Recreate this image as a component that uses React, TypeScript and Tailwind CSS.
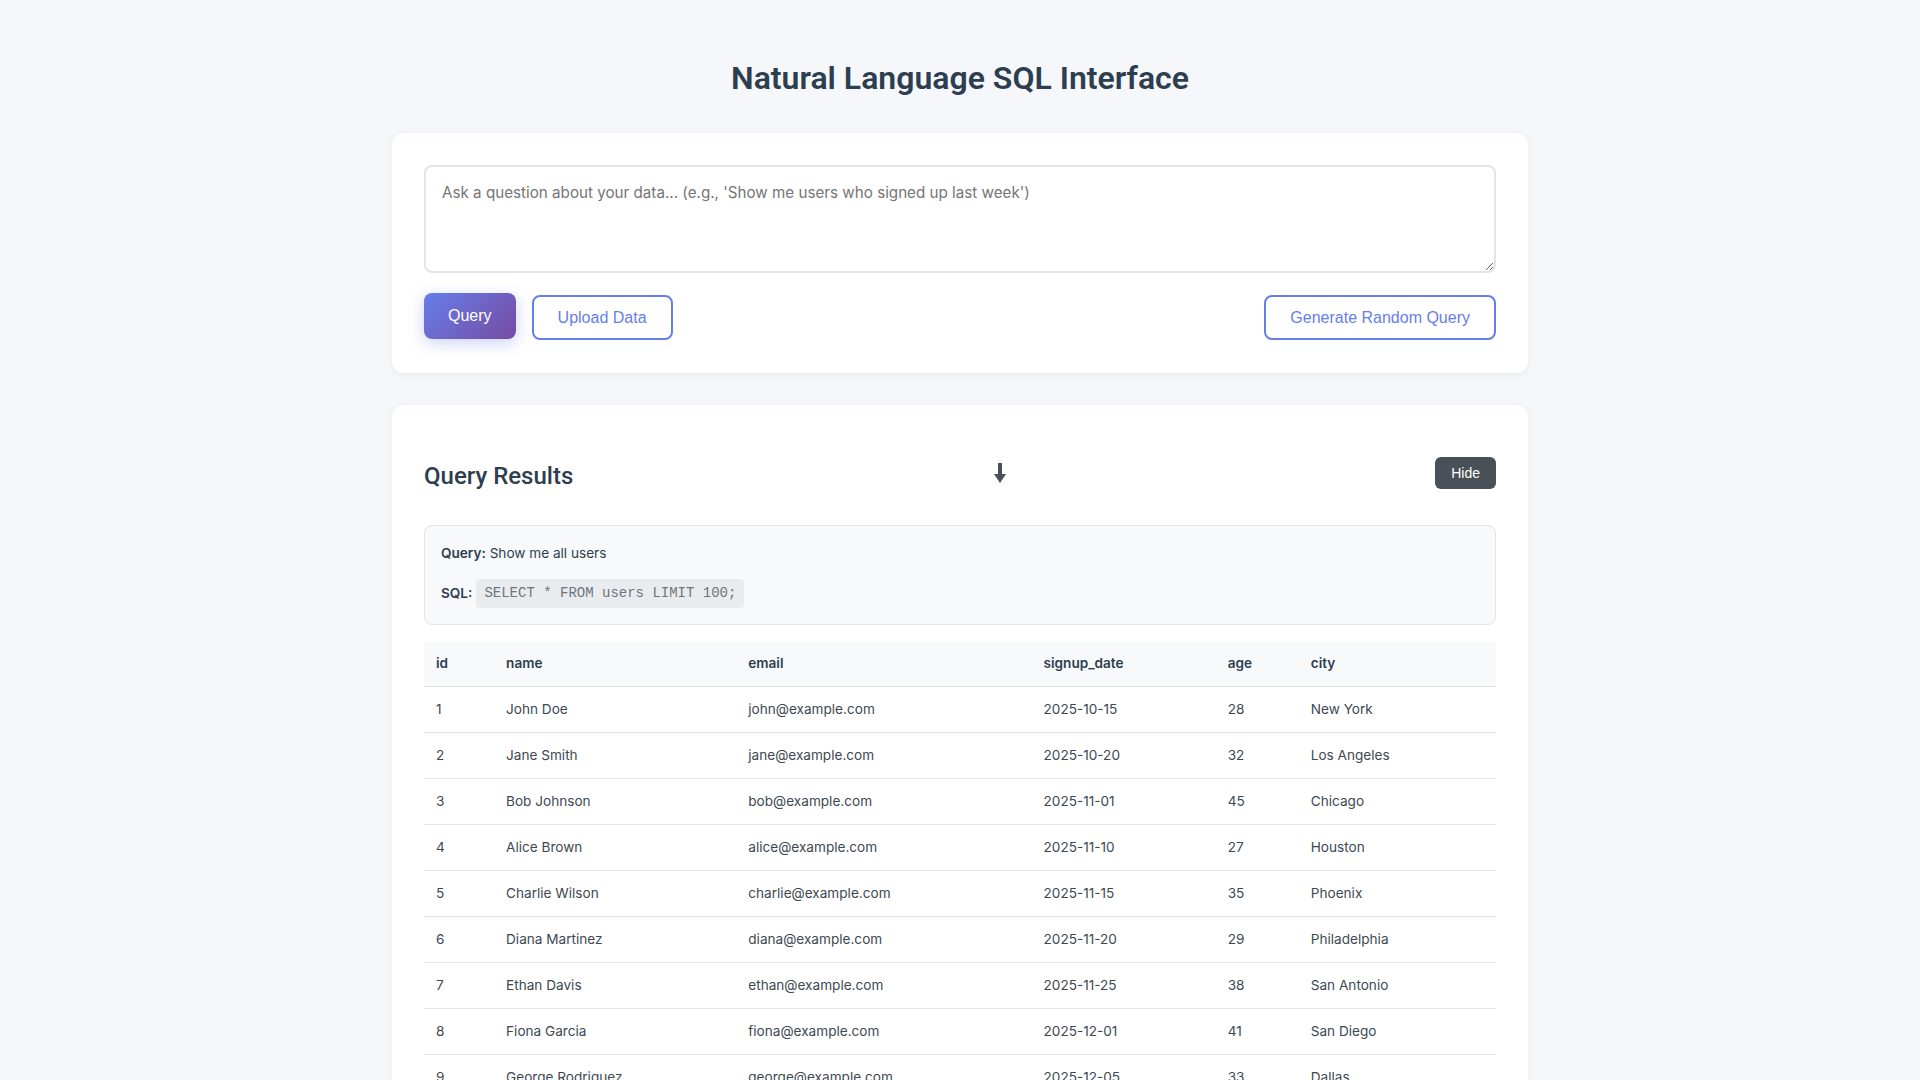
import { useState } from 'react';

const rows = [
  { id: 1, name: 'John Doe', email: 'john@example.com', signup_date: '2025-10-15', age: 28, city: 'New York' },
  { id: 2, name: 'Jane Smith', email: 'jane@example.com', signup_date: '2025-10-20', age: 32, city: 'Los Angeles' },
  { id: 3, name: 'Bob Johnson', email: 'bob@example.com', signup_date: '2025-11-01', age: 45, city: 'Chicago' },
  { id: 4, name: 'Alice Brown', email: 'alice@example.com', signup_date: '2025-11-10', age: 27, city: 'Houston' },
  { id: 5, name: 'Charlie Wilson', email: 'charlie@example.com', signup_date: '2025-11-15', age: 35, city: 'Phoenix' },
  { id: 6, name: 'Diana Martinez', email: 'diana@example.com', signup_date: '2025-11-20', age: 29, city: 'Philadelphia' },
  { id: 7, name: 'Ethan Davis', email: 'ethan@example.com', signup_date: '2025-11-25', age: 38, city: 'San Antonio' },
  { id: 8, name: 'Fiona Garcia', email: 'fiona@example.com', signup_date: '2025-12-01', age: 41, city: 'San Diego' },
  { id: 9, name: 'George Rodriguez', email: 'george@example.com', signup_date: '2025-12-05', age: 33, city: 'Dallas' },
  { id: 10, name: 'Hannah Lee', email: 'hannah@example.com', signup_date: '2025-12-10', age: 26, city: 'San Jose' },
];

const columns = ['id', 'name', 'email', 'signup_date', 'age', 'city'] as const;

function DownloadArrow() {
  return (
    <svg width="12" height="20" viewBox="0 0 12 20" className="block">
      <rect x="4" y="0" width="4" height="12" fill="#4a5058" />
      <polygon points="0,11 12,11 6,20" fill="#4a5058" />
    </svg>
  );
}

export default function App() {
  const [question, setQuestion] = useState('');
  const [showResults, setShowResults] = useState(true);

  return (
    <div className="min-h-screen bg-[#f5f7fa] font-['Inter','Roboto',sans-serif] text-[#2c3e50]">
      <div className="w-[1136px] mx-auto pt-[59px] pb-8">
        <h1 className="text-[32px] leading-[38px] font-semibold text-center text-[#2c3e50] mb-[36px] font-['Roboto',sans-serif]">
          Natural Language SQL Interface
        </h1>

        <div className="bg-white rounded-[12px] px-8 pt-8 pb-[33px] shadow-[0_2px_10px_rgba(0,0,0,0.05)]">
          <textarea
            value={question}
            onChange={(e) => setQuestion(e.target.value)}
            placeholder="Ask a question about your data... (e.g., 'Show me users who signed up last week')"
            className="block w-full h-[108px] border-2 border-[#e1e4e8] rounded-[8px] p-4 text-[15.2px] leading-[19px] text-[#2c3e50] placeholder:text-[#757575] outline-none resize-y"
          />
          <div className="flex items-start justify-between mt-[20px]">
            <div className="flex items-start gap-4">
              <button className="h-[46px] px-6 rounded-[8px] text-white text-[16px] font-['Liberation_Sans',Arial,sans-serif] bg-[linear-gradient(135deg,#667eea_0%,#764ba2_100%)] shadow-[0_4px_15px_rgba(102,126,234,0.35)]">
                Query
              </button>
              <button className="mt-[2px] h-[45px] px-6 rounded-[8px] border-2 border-[#667eea] bg-white text-[#667eea] text-[16px] font-['Liberation_Sans',Arial,sans-serif]">
                Upload Data
              </button>
            </div>
            <button className="mt-[2px] h-[45px] px-6 rounded-[8px] border-2 border-[#667eea] bg-white text-[#667eea] text-[16px] font-['Liberation_Sans',Arial,sans-serif]">
              Generate Random Query
            </button>
          </div>
        </div>

        <div className="bg-white rounded-[12px] px-8 pt-8 pb-8 mt-8 shadow-[0_2px_10px_rgba(0,0,0,0.05)]">
          <div className="flex items-center justify-between h-[72px]">
            <h2 className="text-[24px] leading-[28px] font-medium text-[#2c3e50] mt-[5px] font-['Roboto',sans-serif]">Query Results</h2>
            <button className="mr-[8px]" title="Download CSV">
              <DownloadArrow />
            </button>
            <button
              onClick={() => setShowResults(!showResults)}
              className="h-[32px] px-4 rounded-[6px] bg-[#495057] text-white text-[14px] font-['Liberation_Sans',Arial,sans-serif]"
            >
              {showResults ? 'Hide' : 'Show'}
            </button>
          </div>

          {showResults && (
            <>
              <div className="mt-4 bg-[#f8f9fa] border border-[#e1e4e8] rounded-[8px] px-4 pt-4 pb-4 text-[13.6px] text-[#2c3e50]">
                <div className="leading-[22px]">
                  <span className="font-semibold">Query:</span> Show me all users
                </div>
                <div className="flex items-center gap-[4px] mt-[15px]">
                  <span className="font-semibold leading-[29px]">SQL:</span>
                  <code className="bg-[#e9ecef] rounded-[4px] px-2 py-[6px] leading-[17px] text-[14px] text-[#6c757d] font-['Liberation_Mono','Courier_New',monospace]">
                    SELECT * FROM users LIMIT 100;
                  </code>
                </div>
              </div>

              <table className="w-full table-fixed mt-4 border-collapse text-[13.6px]">
                <colgroup>
                  <col className="w-[70px]" />
                  <col className="w-[242px]" />
                  <col className="w-[295px]" />
                  <col className="w-[184px]" />
                  <col className="w-[83px]" />
                  <col className="w-[197px]" />
                </colgroup>
                <thead>
                  <tr className="bg-[#f8f9fa] border-b border-[#e1e4e8]">
                    {columns.map((c) => (
                      <th key={c} className="text-left px-3 h-[45px] font-semibold text-[#2c3e50]">
                        {c}
                      </th>
                    ))}
                  </tr>
                </thead>
                <tbody>
                  {rows.map((r) => (
                    <tr key={r.id} className="border-b border-[#e1e4e8]">
                      {columns.map((c) => (
                        <td key={c} className="px-3 py-3 leading-[21px] text-[#3d4852]">
                          {r[c]}
                        </td>
                      ))}
                    </tr>
                  ))}
                </tbody>
              </table>
            </>
          )}
        </div>
      </div>
    </div>
  );
}
